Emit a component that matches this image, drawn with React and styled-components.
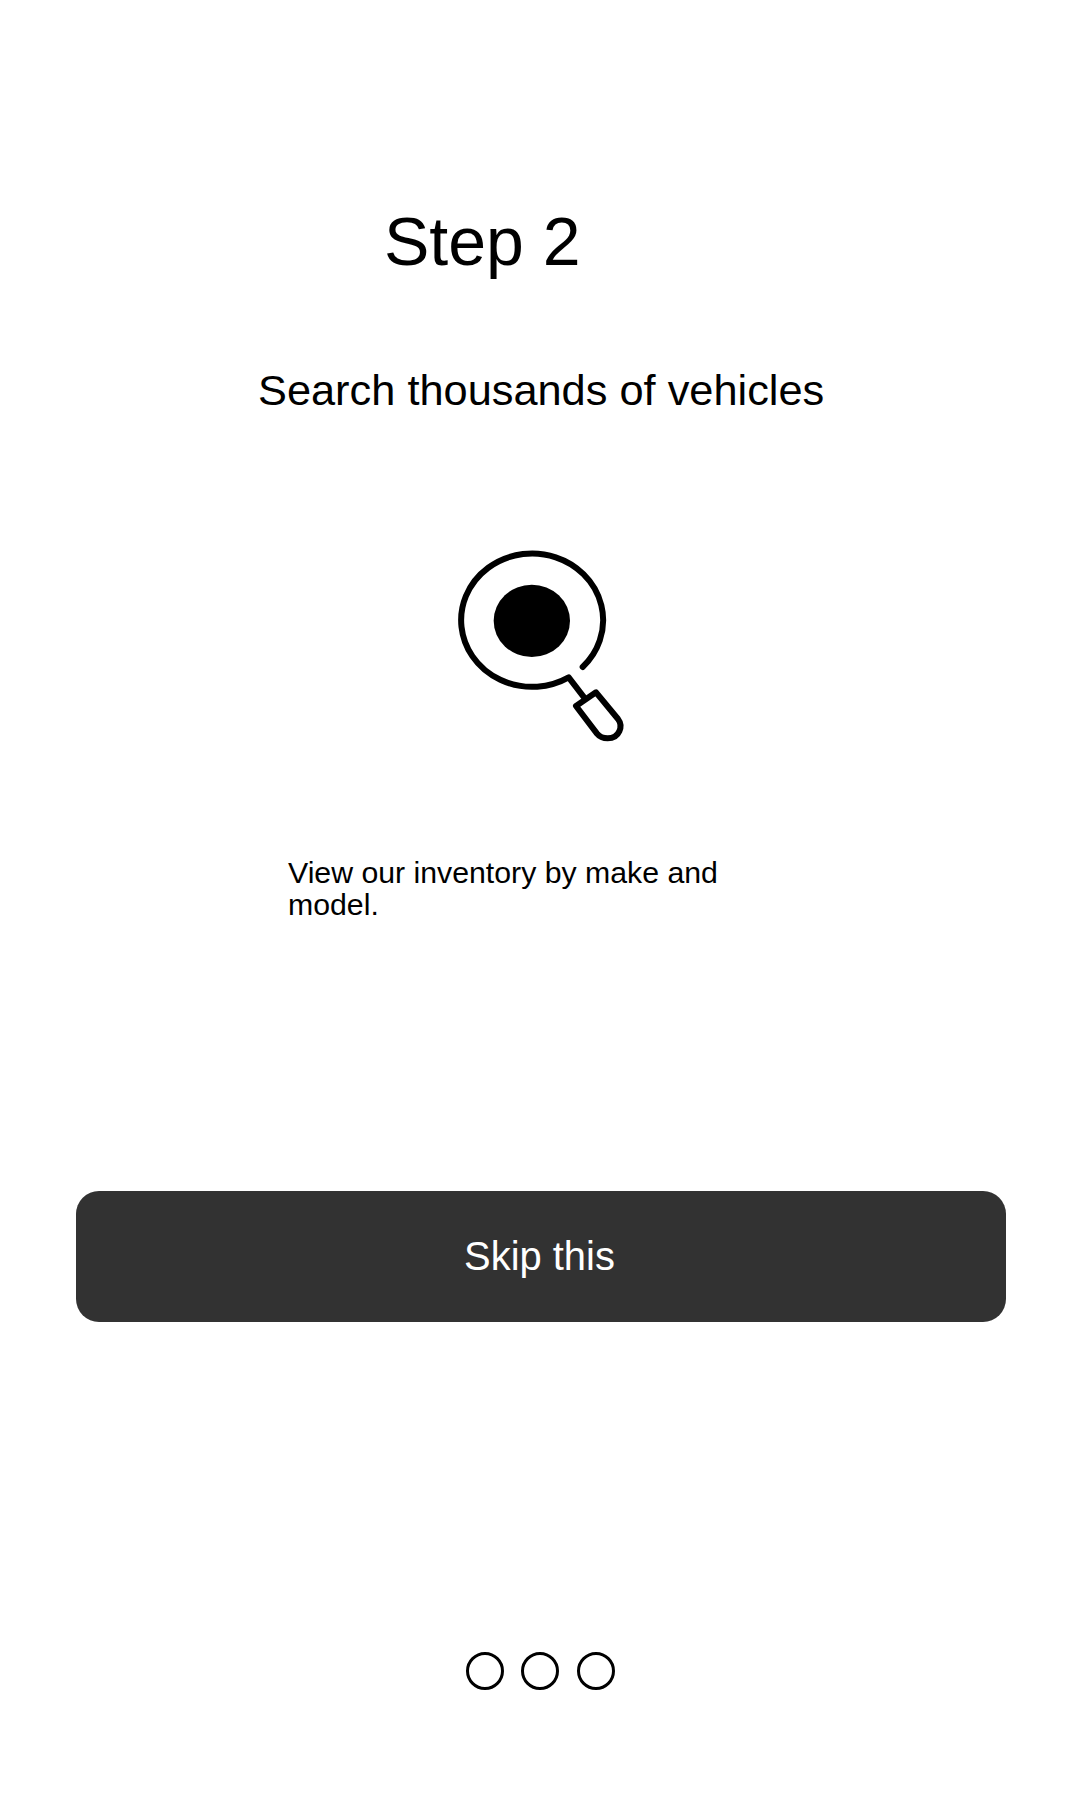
import React from "react";
import styled, { createGlobalStyle } from "styled-components";

const GlobalStyle = createGlobalStyle`
  * { box-sizing: border-box; }
  body {
    margin: 0;
    background: #fff;
    color: #000;
    font-family: "Liberation Sans", Arial, sans-serif;
  }
`;

const Screen = styled.main`
  display: flex;
  flex-direction: column;
  width: 1080px;
  height: 1800px;
  padding: 202px 74px 0 76px;
  background: #fff;
`;

const StepTitle = styled.h1`
  margin: 0 0 0 308px;
  font-size: 68px;
  font-weight: 400;
  line-height: 78px;
`;

const Headline = styled.h2`
  margin: 85px 0 0 182px;
  font-size: 43.35px;
  font-weight: 400;
  line-height: 50px;
  white-space: nowrap;
`;

const SearchIcon = styled.svg`
  flex: none;
  width: 200px;
  height: 210px;
  margin: 125px 0 0 364px;
`;

const Description = styled.p`
  width: 460px;
  margin: 107px 0 0 212px;
  font-size: 30.25px;
  line-height: 32px;
`;

const SkipButton = styled.button`
  width: 930px;
  height: 131px;
  margin-top: 270px;
  padding: 0 3px 2px 0;
  border: 0;
  border-radius: 23px;
  background: #323232;
  color: #fff;
  font: 400 39.9px/46px "Liberation Sans", Arial, sans-serif;
`;

const Pagination = styled.div`
  display: grid;
  grid-template-columns: 55px 56px 38px;
  margin: 330px 0 0 390px;
`;

const Dot = styled.span`
  width: 38px;
  height: 38px;
  border: 3px solid #000;
  border-radius: 50%;
`;

export default function App() {
  return (
    <>
      <GlobalStyle />
      <Screen>
        <StepTitle>Step 2</StepTitle>
        <Headline>Search thousands of vehicles</Headline>
        <SearchIcon
          viewBox="0 0 600 630"
          fill="none"
          stroke="#000"
          strokeWidth="18"
          strokeLinecap="round"
          strokeLinejoin="round"
          aria-hidden="true"
        >
          <path d="M428 381A213 200 0 1 0 386 412L435 476" />
          <ellipse cx="275.5" cy="242.5" rx="114.5" ry="108.5" fill="#000" stroke="none" />
          <path d="M408 498L468 457L534 537C550 558 539 595 503 595C489 595 479 591 471 581Z" />
        </SearchIcon>
        <Description>View our inventory by make and model.</Description>
        <SkipButton type="button">Skip this</SkipButton>
        <Pagination>
          <Dot />
          <Dot />
          <Dot />
        </Pagination>
      </Screen>
    </>
  );
}
